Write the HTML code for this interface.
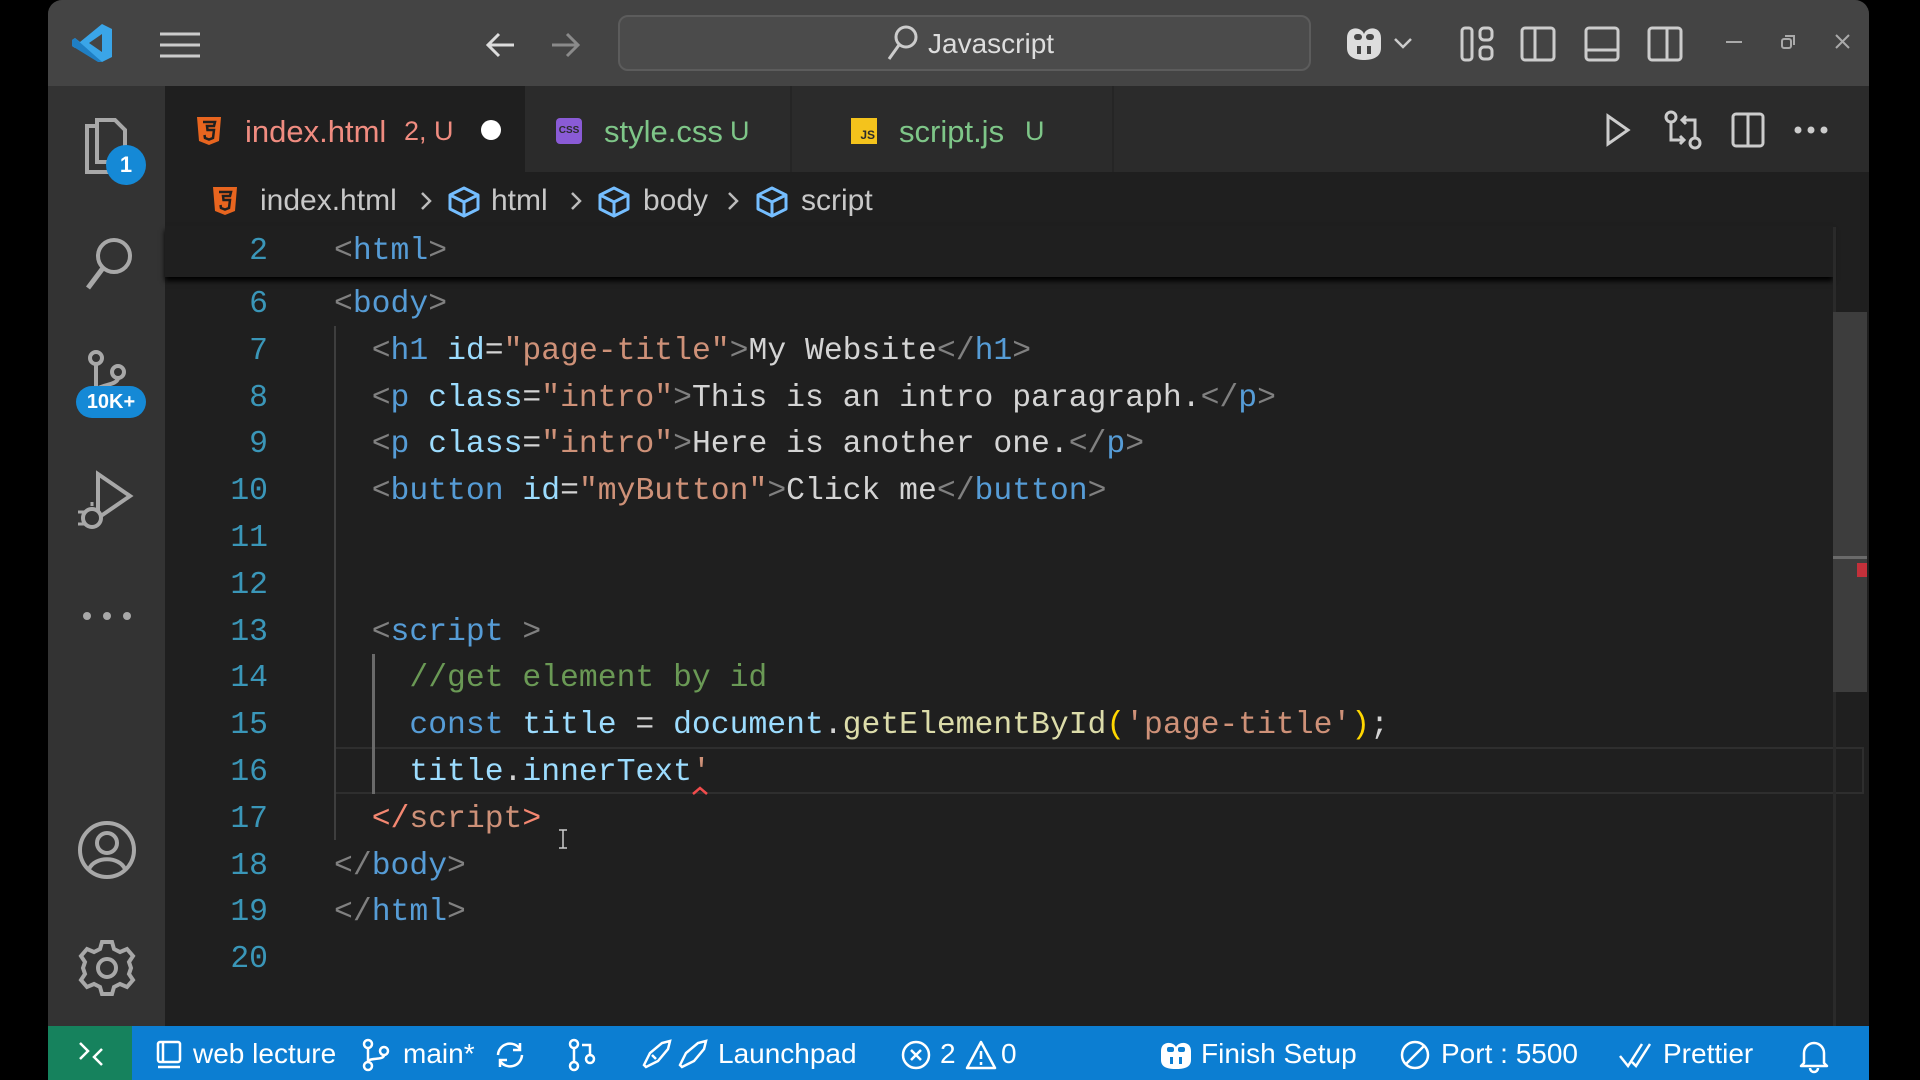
<!DOCTYPE html>
<html><head><meta charset="utf-8"><style>
*{margin:0;padding:0;box-sizing:border-box}
body{width:1920px;height:1080px;background:#000;position:relative;overflow:hidden;font-family:"Liberation Sans",sans-serif}
.a{position:absolute}
.ui{font-family:"Liberation Sans",sans-serif;color:#cccccc;white-space:nowrap}
.code{position:absolute;left:334px;font-family:"Liberation Mono",monospace;font-size:31.4px;line-height:46.8px;height:46.8px;white-space:pre;color:#d4d4d4;margin-top:3px}
.ln{position:absolute;left:180px;width:88px;text-align:right;font-family:"Liberation Mono",monospace;font-size:31.4px;line-height:46.8px;color:#3a96b8;margin-top:3px}
.b{color:#808080}.t{color:#569cd6}.at{color:#9cdcfe}.s{color:#ce9178}.c{color:#6a9955}.f{color:#dcdcaa}.p{color:#ffd700}.r{color:#f48771}
svg{position:absolute;overflow:visible}
.st{color:#fff;font-size:28px;position:absolute;top:1038px;white-space:nowrap}
</style></head><body>
<div class="a" style="left:48px;top:0;width:1821px;height:1080px;background:#1f1f1f;border-radius:14px 14px 0 0"></div>
<div class="a" style="left:48px;top:0;width:1821px;height:86px;background:#444444;border-radius:14px 14px 0 0"></div>
<svg style="left:72px;top:22px" width="42" height="42" viewBox="0 0 42 42"><path d="M30 2 L40 7 V35 L30 40 L8 22 L3 26 L0 24 V18 L3 16 L8 20 Z M30 12 L17 21 L30 30 Z" fill="#3aa5e8"/><path d="M0 18 L3 16 L30 40 L26 40 L0 24Z" fill="#1f7fc4"/></svg>
<svg style="left:160px;top:32px" width="40" height="26"><path d="M0 2H40M0 13H40M0 24H40" stroke="#ccc" stroke-width="3"/></svg>
<svg style="left:486px;top:32px" width="30" height="26"><path d="M28 13H3M13 2L2 13L13 24" stroke="#ddd" stroke-width="3" fill="none"/></svg>
<svg style="left:550px;top:32px" width="30" height="26"><path d="M2 13H27M17 2L28 13L17 24" stroke="#8a8a8a" stroke-width="3" fill="none"/></svg>
<div class="a" style="left:618px;top:15px;width:693px;height:56px;background:#4b4b4b;border:2px solid #5c5c5c;border-radius:10px"></div>
<svg style="left:886px;top:25px" width="32" height="36"><circle cx="20" cy="12" r="10" stroke="#ccc" stroke-width="3" fill="none"/><path d="M13 20L3 34" stroke="#ccc" stroke-width="3"/></svg>
<div class="ui a" style="left:928px;top:28px;font-size:28px;color:#ddd">Javascript</div>
<svg style="left:1343px;top:24px" width="42" height="38"><path d="M4 14C4 2 18 2 21 10C24 2 38 2 38 14V24C38 34 28 36 21 36C14 36 4 34 4 24Z" fill="#ddd"/><rect x="11" y="10" width="8" height="6" rx="3" fill="#444"/><rect x="23" y="10" width="8" height="6" rx="3" fill="#444"/><rect x="14" y="22" width="4" height="8" fill="#444"/><rect x="24" y="22" width="4" height="8" fill="#444"/></svg>
<svg style="left:1394px;top:38px" width="18" height="10"><path d="M1 1L9 9L17 1" stroke="#ccc" stroke-width="2.5" fill="none"/></svg>
<svg style="left:1460px;top:26px" width="34" height="36"><rect x="2" y="2" width="10" height="32" rx="3" stroke="#ccc" stroke-width="3" fill="none"/><rect x="20" y="2" width="12" height="12" rx="4" stroke="#ccc" stroke-width="3" fill="none"/><rect x="20" y="21" width="12" height="12" rx="4" stroke="#ccc" stroke-width="3" fill="none"/></svg>
<svg style="left:1520px;top:26px" width="36" height="36"><rect x="2" y="2" width="32" height="32" rx="3" stroke="#ccc" stroke-width="3" fill="none"/><path d="M15 2V34" stroke="#ccc" stroke-width="3"/></svg>
<svg style="left:1584px;top:26px" width="36" height="36"><rect x="2" y="2" width="32" height="32" rx="3" stroke="#ccc" stroke-width="3" fill="none"/><path d="M2 24H34" stroke="#ccc" stroke-width="3"/></svg>
<svg style="left:1647px;top:26px" width="36" height="36"><rect x="2" y="2" width="32" height="32" rx="3" stroke="#ccc" stroke-width="3" fill="none"/><path d="M20 2V34" stroke="#ccc" stroke-width="3"/></svg>
<svg style="left:1726px;top:40px" width="16" height="4"><path d="M0 2H16" stroke="#aaa" stroke-width="2"/></svg>
<svg style="left:1781px;top:35px" width="14" height="14"><rect x="1" y="4" width="9" height="9" rx="2" stroke="#aaa" stroke-width="2" fill="none"/><path d="M4 1H13V10" stroke="#aaa" stroke-width="2" fill="none"/></svg>
<svg style="left:1835px;top:34px" width="15" height="15"><path d="M1 1L14 14M14 1L1 14" stroke="#aaa" stroke-width="2"/></svg>
<div class="a" style="left:48px;top:86px;width:117px;height:940px;background:#333333"></div>
<svg style="left:85px;top:118px" width="44" height="56"><path d="M10 8H2V54H30V46" stroke="#a8a8a8" stroke-width="4" fill="none"/><path d="M12 2H30L40 12V44H12Z" stroke="#a8a8a8" stroke-width="4" fill="none"/></svg>
<div class="a" style="left:106px;top:145px;width:40px;height:40px;border-radius:50%;background:#1589d6;color:#fff;font-size:22px;font-weight:bold;text-align:center;line-height:40px">1</div>
<svg style="left:84px;top:236px" width="50" height="56"><circle cx="30" cy="20" r="16" stroke="#a8a8a8" stroke-width="4" fill="none"/><path d="M19 32L4 52" stroke="#a8a8a8" stroke-width="5"/></svg>
<svg style="left:86px;top:350px" width="44" height="50"><circle cx="10" cy="8" r="6" stroke="#a8a8a8" stroke-width="4" fill="none"/><circle cx="32" cy="22" r="6" stroke="#a8a8a8" stroke-width="4" fill="none"/><path d="M10 14V44M32 28C32 36 10 34 10 42" stroke="#a8a8a8" stroke-width="4" fill="none"/></svg>
<div class="a" style="left:76px;top:386px;width:70px;height:32px;border-radius:16px;background:#1589d6;color:#fff;font-size:20px;font-weight:bold;text-align:center;line-height:32px">10K+</div>
<svg style="left:76px;top:470px" width="60" height="62"><path d="M22 4L54 26L22 48Z" stroke="#a8a8a8" stroke-width="4" fill="none"/><circle cx="16" cy="48" r="9" stroke="#a8a8a8" stroke-width="4" fill="#333"/><path d="M2 42H8M2 54H8M16 36V32" stroke="#a8a8a8" stroke-width="3"/></svg>
<svg style="left:82px;top:611px" width="50" height="10"><circle cx="5" cy="5" r="4" fill="#a8a8a8"/><circle cx="25" cy="5" r="4" fill="#a8a8a8"/><circle cx="45" cy="5" r="4" fill="#a8a8a8"/></svg>
<svg style="left:77px;top:820px" width="60" height="60"><circle cx="30" cy="30" r="27" stroke="#a8a8a8" stroke-width="4" fill="none"/><circle cx="30" cy="23" r="10" stroke="#a8a8a8" stroke-width="4" fill="none"/><path d="M12 49C18 36 42 36 48 49" stroke="#a8a8a8" stroke-width="4" fill="none"/></svg>
<svg style="left:77px;top:938px" width="60" height="60" viewBox="-30 -30 60 60"><g stroke="#a8a8a8" stroke-width="4" fill="none"><circle r="9"/><path d="M-5 -26H5L7 -19L13 -16L20 -19L26 -12L22 -6L24 0L22 6L26 12L20 19L13 16L7 19L5 26H-5L-7 19L-13 16L-20 19L-26 12L-22 6L-24 0L-22 -6L-26 -12L-20 -19L-13 -16L-7 -19Z"/></g></svg>
<div class="a" style="left:165px;top:86px;width:1704px;height:86px;background:#2b2b2b"></div>
<div class="a" style="left:165px;top:86px;width:360px;height:86px;background:#1f1f1f"></div>
<div class="a" style="left:790px;top:86px;width:2px;height:86px;background:#252525"></div>
<div class="a" style="left:1112px;top:86px;width:2px;height:86px;background:#252525"></div>
<svg style="left:196px;top:116px" width="26" height="30"><path d="M1 1H25L23 25L13 29L3 25Z" fill="#e8651f"/><path d="M7 6H19L18 10H11L11.5 14H18L17 22L13 23.5L9 22L8.5 19" stroke="#1f1f1f" stroke-width="2.5" fill="none"/></svg>
<div class="ui a" style="left:245px;top:114px;font-size:31px;color:#f08c80">index.html</div>
<div class="ui a" style="left:404px;top:116px;font-size:27px;color:#f08c80">2, U</div>
<div class="a" style="left:481px;top:120px;width:20px;height:20px;border-radius:50%;background:#fff"></div>
<div class="a" style="left:556px;top:118px;width:26px;height:26px;border-radius:4px;background:#8a5bd6;color:#2b2b2b;font-size:10px;font-weight:bold;text-align:center;line-height:26px">CSS</div>
<div class="ui a" style="left:604px;top:114px;font-size:31px;color:#7ec688">style.css</div>
<div class="ui a" style="left:730px;top:116px;font-size:27px;color:#7ec688">U</div>
<div class="a" style="left:851px;top:118px;width:26px;height:26px;background:#f4c31c;color:#2b2b2b;font-size:12px;font-weight:bold;text-align:right;line-height:34px;padding-right:2px">JS</div>
<div class="ui a" style="left:899px;top:114px;font-size:31px;color:#7ec688">script.js</div>
<div class="ui a" style="left:1025px;top:116px;font-size:27px;color:#7ec688">U</div>
<svg style="left:1605px;top:113px" width="26" height="34"><path d="M3 3L23 17L3 31Z" stroke="#ccc" stroke-width="3" fill="none"/></svg>
<svg style="left:1664px;top:110px" width="40" height="40"><circle cx="7" cy="7" r="5" stroke="#ccc" stroke-width="3" fill="none"/><circle cx="31" cy="33" r="5" stroke="#ccc" stroke-width="3" fill="none"/><path d="M7 12V30H20M16 26L20 30L16 34M31 28V10H18M22 6L18 10L22 14" stroke="#ccc" stroke-width="3" fill="none"/></svg>
<svg style="left:1731px;top:112px" width="34" height="36"><rect x="2" y="2" width="30" height="32" rx="3" stroke="#ccc" stroke-width="3" fill="none"/><path d="M17 2V34" stroke="#ccc" stroke-width="3"/></svg>
<svg style="left:1794px;top:126px" width="34" height="8"><circle cx="4" cy="4" r="3.5" fill="#ccc"/><circle cx="17" cy="4" r="3.5" fill="#ccc"/><circle cx="30" cy="4" r="3.5" fill="#ccc"/></svg>
<svg style="left:212px;top:186px" width="26" height="30"><path d="M1 1H25L23 25L13 29L3 25Z" fill="#e8651f"/><path d="M7 6H19L18 10H11L11.5 14H18L17 22L13 23.5L9 22L8.5 19" stroke="#1f1f1f" stroke-width="2.5" fill="none"/></svg>
<div class="ui a" style="left:260px;top:184px;font-size:30px;color:#c8c8c8">index.html</div>
<svg style="left:420px;top:191px" width="12" height="20"><path d="M2 2L10 10L2 18" stroke="#bbb" stroke-width="2.5" fill="none"/></svg>
<svg style="left:447px;top:186px" width="34" height="32"><path d="M17 2L31 9V23L17 30L3 23V9Z M3 9L17 16L31 9 M17 16V30" stroke="#75beff" stroke-width="3" fill="none" stroke-linejoin="round"/></svg>
<div class="ui a" style="left:491px;top:184px;font-size:30px;color:#c8c8c8">html</div>
<svg style="left:570px;top:191px" width="12" height="20"><path d="M2 2L10 10L2 18" stroke="#bbb" stroke-width="2.5" fill="none"/></svg>
<svg style="left:597px;top:186px" width="34" height="32"><path d="M17 2L31 9V23L17 30L3 23V9Z M3 9L17 16L31 9 M17 16V30" stroke="#75beff" stroke-width="3" fill="none" stroke-linejoin="round"/></svg>
<div class="ui a" style="left:643px;top:184px;font-size:30px;color:#c8c8c8">body</div>
<svg style="left:727px;top:191px" width="12" height="20"><path d="M2 2L10 10L2 18" stroke="#bbb" stroke-width="2.5" fill="none"/></svg>
<svg style="left:755px;top:186px" width="34" height="32"><path d="M17 2L31 9V23L17 30L3 23V9Z M3 9L17 16L31 9 M17 16V30" stroke="#75beff" stroke-width="3" fill="none" stroke-linejoin="round"/></svg>
<div class="ui a" style="left:801px;top:184px;font-size:30px;color:#c8c8c8">script</div>
<div class="a" style="left:334px;top:747px;width:1530px;height:47px;border:2px solid #2e2e2e"></div>
<div class="a" style="left:334px;top:326px;width:2px;height:514px;background:#3e3e3e"></div>
<div class="a" style="left:372px;top:654px;width:3px;height:140px;background:#6a6a6a"></div>
<div class="a" style="left:165px;top:226px;width:1668px;height:51px;background:#1f1f1f;box-shadow:0 4px 5px #000"></div>
<div class="ln" style="top:226px">2</div>
<div class="code" style="top:226px"><span class="b">&lt;</span><span class="t">html</span><span class="b">&gt;</span></div>
<div class="ln" style="top:279px">6</div><div class="code" style="top:279px"><span class="b">&lt;</span><span class="t">body</span><span class="b">&gt;</span></div>
<div class="ln" style="top:325.8px">7</div><div class="code" style="top:325.8px">  <span class="b">&lt;</span><span class="t">h1</span> <span class="at">id</span>=<span class="s">"page-title"</span><span class="b">&gt;</span>My Website<span class="b">&lt;/</span><span class="t">h1</span><span class="b">&gt;</span></div>
<div class="ln" style="top:372.6px">8</div><div class="code" style="top:372.6px">  <span class="b">&lt;</span><span class="t">p</span> <span class="at">class</span>=<span class="s">"intro"</span><span class="b">&gt;</span>This is an intro paragraph.<span class="b">&lt;/</span><span class="t">p</span><span class="b">&gt;</span></div>
<div class="ln" style="top:419.4px">9</div><div class="code" style="top:419.4px">  <span class="b">&lt;</span><span class="t">p</span> <span class="at">class</span>=<span class="s">"intro"</span><span class="b">&gt;</span>Here is another one.<span class="b">&lt;/</span><span class="t">p</span><span class="b">&gt;</span></div>
<div class="ln" style="top:466.2px">10</div><div class="code" style="top:466.2px">  <span class="b">&lt;</span><span class="t">button</span> <span class="at">id</span>=<span class="s">"myButton"</span><span class="b">&gt;</span>Click me<span class="b">&lt;/</span><span class="t">button</span><span class="b">&gt;</span></div>
<div class="ln" style="top:513px">11</div>
<div class="ln" style="top:559.8px">12</div>
<div class="ln" style="top:606.6px">13</div><div class="code" style="top:606.6px">  <span class="b">&lt;</span><span class="t">script</span> <span class="b">&gt;</span></div>
<div class="ln" style="top:653.4px">14</div><div class="code" style="top:653.4px">    <span class="c">//get element by id</span></div>
<div class="ln" style="top:700.2px">15</div><div class="code" style="top:700.2px">    <span class="t">const</span> <span class="at">title</span> = <span class="at">document</span>.<span class="f">getElementById</span><span class="p">(</span><span class="s">'page-title'</span><span class="p">)</span>;</div>
<div class="ln" style="top:747px">16</div><div class="code" style="top:747px">    <span class="at">title</span>.<span class="at">innerText</span><span class="s">'</span></div>
<svg style="left:692px;top:787px" width="16" height="8"><path d="M1 7L8 1L15 7" stroke="#f14c4c" stroke-width="2.5" fill="none"/></svg>
<div class="ln" style="top:793.8px">17</div><div class="code" style="top:793.8px">  <span class="r">&lt;/</span><span class="s">script</span><span class="r">&gt;</span></div>
<div class="ln" style="top:840.6px">18</div><div class="code" style="top:840.6px"><span class="b">&lt;/</span><span class="t">body</span><span class="b">&gt;</span></div>
<div class="ln" style="top:887.4px">19</div><div class="code" style="top:887.4px"><span class="b">&lt;/</span><span class="t">html</span><span class="b">&gt;</span></div>
<div class="ln" style="top:934.2px">20</div>
<svg style="left:558px;top:829px" width="10" height="20"><path d="M1 1H9M5 1V19M1 19H9" stroke="#ccc" stroke-width="1.5"/></svg>
<div class="a" style="left:1833px;top:227px;width:3px;height:799px;background:#2a2a2a"></div>
<div class="a" style="left:1833px;top:312px;width:34px;height:380px;background:#3d3d3d"></div>
<div class="a" style="left:1833px;top:556px;width:34px;height:3px;background:#6a6a6a"></div>
<div class="a" style="left:1857px;top:563px;width:10px;height:14px;background:#c3303a"></div>
<div class="a" style="left:48px;top:1026px;width:1821px;height:54px;background:#0c7ed2"></div>
<div class="a" style="left:48px;top:1026px;width:84px;height:54px;background:#16825d"></div>
<svg style="left:78px;top:1041px" width="26" height="26"><path d="M2 2L10 10L2 18M24 8L16 16L24 24" stroke="#fff" stroke-width="2.5" fill="none"/></svg>
<svg style="left:155px;top:1040px" width="28" height="30"><rect x="3" y="2" width="22" height="20" rx="2" stroke="#fff" stroke-width="2.5" fill="none"/><path d="M8 2V22M3 27H25" stroke="#fff" stroke-width="2.5"/></svg>
<div class="st" style="left:193px">web lecture</div>
<svg style="left:362px;top:1039px" width="28" height="32"><circle cx="6" cy="5" r="4" stroke="#fff" stroke-width="2.5" fill="none"/><circle cx="22" cy="12" r="4" stroke="#fff" stroke-width="2.5" fill="none"/><circle cx="6" cy="27" r="4" stroke="#fff" stroke-width="2.5" fill="none"/><path d="M6 9V23M22 16C22 22 6 18 6 23" stroke="#fff" stroke-width="2.5" fill="none"/></svg>
<div class="st" style="left:403px">main*</div>
<svg style="left:494px;top:1041px" width="32" height="28"><path d="M4 14A12 12 0 0 1 26 8M28 14A12 12 0 0 1 6 20M26 2V9H19M6 26V19H13" stroke="#fff" stroke-width="2.5" fill="none"/></svg>
<svg style="left:568px;top:1039px" width="30" height="32"><circle cx="6" cy="5" r="4" stroke="#fff" stroke-width="2.5" fill="none"/><circle cx="6" cy="27" r="4" stroke="#fff" stroke-width="2.5" fill="none"/><circle cx="22" cy="20" r="4" stroke="#fff" stroke-width="2.5" fill="none"/><path d="M6 9V23M22 16V6H14" stroke="#fff" stroke-width="2.5" fill="none"/></svg>
<svg style="left:640px;top:1039px" width="70" height="32"><path d="M4 26L10 14L22 4L30 2L28 10L18 22L6 28ZM12 16L16 20" stroke="#fff" stroke-width="2.5" fill="none"/><path d="M40 26L46 14L58 4L66 2L64 10L54 22L42 28Z" stroke="#fff" stroke-width="2.5" fill="none"/></svg>
<div class="st" style="left:718px">Launchpad</div>
<svg style="left:901px;top:1040px" width="30" height="30"><circle cx="15" cy="15" r="13" stroke="#fff" stroke-width="2.5" fill="none"/><path d="M10 10L20 20M20 10L10 20" stroke="#fff" stroke-width="2.5"/></svg>
<div class="st" style="left:940px">2</div>
<svg style="left:965px;top:1040px" width="32" height="30"><path d="M16 2L30 28H2Z" stroke="#fff" stroke-width="2.5" fill="none" stroke-linejoin="round"/><path d="M16 11V19M16 22V25" stroke="#fff" stroke-width="2.5"/></svg>
<div class="st" style="left:1001px">0</div>
<svg style="left:1158px;top:1039px" width="36" height="32"><path d="M3 12C3 2 15 2 18 8C21 2 33 2 33 12V21C33 29 25 30 18 30C11 30 3 29 3 21Z" fill="#fff"/><rect x="9" y="8" width="7" height="5" rx="2" fill="#0c7ed2"/><rect x="20" y="8" width="7" height="5" rx="2" fill="#0c7ed2"/><rect x="12" y="18" width="3" height="7" fill="#0c7ed2"/><rect x="21" y="18" width="3" height="7" fill="#0c7ed2"/></svg>
<div class="st" style="left:1201px">Finish Setup</div>
<svg style="left:1400px;top:1040px" width="30" height="30"><circle cx="15" cy="15" r="13" stroke="#fff" stroke-width="2.5" fill="none"/><path d="M6 24L24 6" stroke="#fff" stroke-width="2.5"/></svg>
<div class="st" style="left:1441px">Port : 5500</div>
<svg style="left:1618px;top:1042px" width="36" height="26"><path d="M2 14L10 24L24 2M14 20L18 24L32 2" stroke="#fff" stroke-width="2.5" fill="none"/></svg>
<div class="st" style="left:1663px">Prettier</div>
<svg style="left:1800px;top:1039px" width="28" height="32"><path d="M4 24V14A10 10 0 0 1 24 14V24L27 27H1Z M10 29A4 4 0 0 0 18 29" stroke="#fff" stroke-width="2.5" fill="none" stroke-linejoin="round"/></svg>
</body></html>
